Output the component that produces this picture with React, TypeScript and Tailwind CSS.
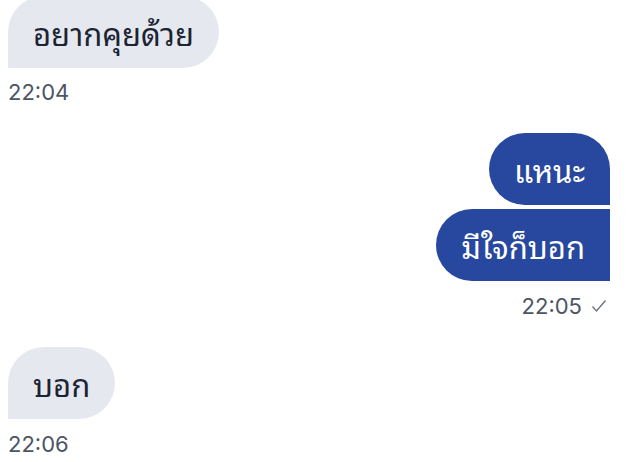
import React from 'react'

type Msg = {
  text: string
  mine?: boolean
  shape: string
}

function Bubble({ text, mine, shape }: Msg) {
  return (
    <div
      className={`h-[72px] px-[25px] flex items-center font-['Noto_Sans_Thai_Looped','Noto_Sans_Thai',sans-serif] text-[31px] leading-none ${shape} ${
        mine ? 'bg-[#27489e] text-white' : 'bg-[#e5e9ef] text-[#1c2433]'
      }`}
    >
      {text}
    </div>
  )
}

function Time({ value, mine }: { value: string; mine?: boolean }) {
  return (
    <div
      className={`flex items-center gap-[9px] font-['Inter',sans-serif] text-[22px] leading-[26px] text-[#4b5563] ${
        mine ? 'justify-end pr-[3px]' : ''
      }`}
    >
      <span>{value}</span>
      {mine && (
        <svg width="16" height="14" viewBox="0 0 16 14" fill="none" stroke="#6b7280" strokeWidth="1.4">
          <polyline points="1.5,7.5 5.5,12 14.5,1.5" />
        </svg>
      )}
    </div>
  )
}

export default function App() {
  return (
    <div className="w-[641px] h-[462px] overflow-hidden bg-white pl-2 pr-[31px]">
      {/* received */}
      <div className="-mt-1 flex flex-col items-start">
        <Bubble text="อยากคุยด้วย" shape="rounded-[36px] rounded-bl-none" />
        <div className="mt-[11px]">
          <Time value="22:04" />
        </div>
      </div>

      {/* sent */}
      <div className="mt-[28px] flex flex-col items-end gap-[4px]">
        <Bubble text="แหนะ" mine shape="rounded-[36px] rounded-br-none" />
        <Bubble text="มีใจก็บอก" mine shape="rounded-l-[36px]" />
      </div>
      <div className="mt-[12px]">
        <Time value="22:05" mine />
      </div>

      {/* received */}
      <div className="mt-[28px] flex flex-col items-start">
        <Bubble text="บอก" shape="rounded-[36px] rounded-bl-none" />
        <div className="mt-[12px]">
          <Time value="22:06" />
        </div>
      </div>
    </div>
  )
}
